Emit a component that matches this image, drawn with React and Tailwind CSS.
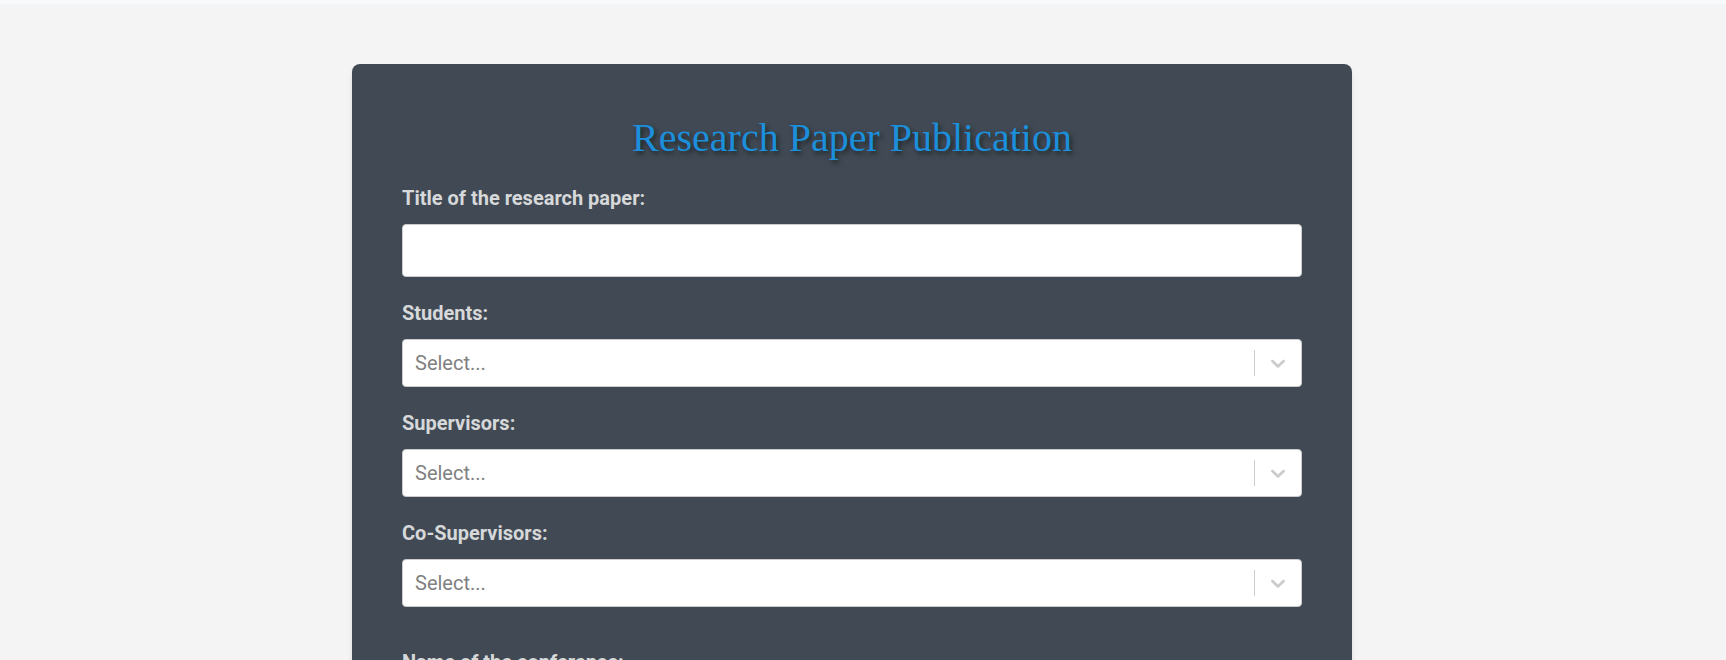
import React from 'react'

function Chevron() {
  return (
    <svg viewBox="0 0 20 20" width="24" height="24" fill="#cccccc" aria-hidden="true">
      <path d="M4.516 7.548c0.436-0.446 1.043-0.481 1.576 0l3.908 3.747 3.908-3.747c0.533-0.481 1.141-0.446 1.574 0 0.436 0.445 0.408 1.197 0 1.615-0.406 0.418-4.695 4.502-4.695 4.502-0.217 0.223-0.502 0.335-0.787 0.335s-0.57-0.112-0.789-0.335c0 0-4.287-4.084-4.695-4.502s-0.436-1.17 0-1.615z" />
    </svg>
  )
}

function Label({ children, className = '' }) {
  return (
    <label className={`block text-[20px] leading-[22px] font-bold text-[#d6d8da] ${className}`}>
      {children}
    </label>
  )
}

function SelectBox() {
  return (
    <div className="flex h-[48px] items-stretch rounded-[4px] border border-[#cccccc] bg-white">
      <div className="flex flex-1 items-center pl-[12px] text-[20px] text-[#808080]">Select...</div>
      <div className="flex items-stretch">
        <span className="my-[10px] w-px bg-[#cccccc]" />
        <div className="flex items-center px-[11px]">
          <Chevron />
        </div>
      </div>
    </div>
  )
}

export default function App() {
  const selects = ['Students:', 'Supervisors:', 'Co-Supervisors:']

  return (
    <div className="min-h-screen bg-[#f4f4f4] font-['Roboto',sans-serif]">
      <div className="h-[4px] bg-[#f8f9fa]" />
      <div className="flex justify-center pr-[22px] pt-[60px] pb-[40px]">
        <div className="w-[1000px] rounded-[8px] bg-[#414a54] px-[50px] pt-[51px] pb-[50px] shadow-md">
          <h1 className="text-center font-['Liberation_Serif',serif] text-[40px] leading-[46px] text-[#1b8fdb] [text-shadow:2px_3px_5px_rgba(0,0,0,0.55)]">
            Research Paper Publication
          </h1>

          <div className="mt-[26px]">
            <Label>Title of the research paper:</Label>
            <input
              type="text"
              className="mt-[15px] block h-[53px] w-full rounded-[4px] border border-[#cccccc] bg-white px-3 text-[20px] outline-none"
            />
          </div>

          {selects.map((s) => (
            <div key={s} className="mt-[25px]">
              <Label>{s}</Label>
              <div className="mt-[15px]">
                <SelectBox />
              </div>
            </div>
          ))}

          <div className="mt-[44px]">
            <Label>Name of the conference:</Label>
            <input
              type="text"
              className="mt-[15px] block h-[53px] w-full rounded-[4px] border border-[#cccccc] bg-white px-3 text-[20px] outline-none"
            />
          </div>

          <div className="mt-[25px]">
            <Label>Date of publication:</Label>
            <input
              type="text"
              className="mt-[15px] block h-[53px] w-full rounded-[4px] border border-[#cccccc] bg-white px-3 text-[20px] outline-none"
            />
          </div>
        </div>
      </div>
    </div>
  )
}
